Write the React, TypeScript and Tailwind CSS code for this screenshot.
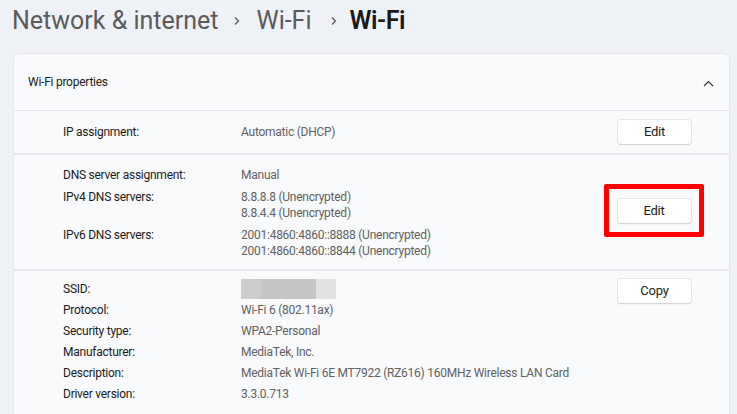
import React from "react";

type Prop = { label: string; value: React.ReactNode };

const EditButton = ({ text }: { text: string }) => (
  <button
    type="button"
    className="w-[75px] h-[26px] rounded-[4px] border border-[#e5e5e5] border-b-[#d4d4d4] bg-white text-[13px] tracking-[-0.2px] text-[#1b1b1b] shadow-[0_1px_0_rgba(0,0,0,0.03)]"
  >
    {text}
  </button>
);

const Chevron = ({ className }: { className: string }) => (
  <svg width="10" height="12" viewBox="0 0 10 12" className={className}>
    <path d="M3 2.5 L6.5 6 L3 9.5" fill="none" stroke="#5c5c5c" strokeWidth="1.3" />
  </svg>
);

const App = () => {
  const details: Prop[] = [
    { label: "Protocol:", value: "Wi-Fi 6 (802.11ax)" },
    { label: "Security type:", value: "WPA2-Personal" },
    { label: "Manufacturer:", value: "MediaTek, Inc." },
    { label: "Description:", value: "MediaTek Wi-Fi 6E MT7922 (RZ616) 160MHz Wireless LAN Card" },
    { label: "Driver version:", value: "3.3.0.713" },
  ];

  return (
    <div
      className="w-[737px] h-[414px] overflow-hidden bg-[#eef2f7] pl-[13px] pr-[7px]"
      style={{ fontFamily: "Roboto, 'Noto Sans', sans-serif" }}
    >
      {/* breadcrumb */}
      <div className="h-[53px] flex items-start pt-[5px] text-[25px] leading-[32px]">
        <span className="text-[#5a5a5a] -ml-[1px]">Network &amp; internet</span>
        <Chevron className="ml-[14px] mr-[14px] mt-[10px]" />
        <span className="text-[#5a5a5a]">Wi-Fi</span>
        <Chevron className="ml-[17px] mr-[11px] mt-[10px]" />
        <span className="text-[#1a1a1a] font-semibold tracking-[-0.5px]">Wi-Fi</span>
      </div>

      <div className="rounded-t-[6px] border border-[#e3e6ea] bg-[#f9fafc] text-[12px] tracking-[-0.25px]">
        <div className="h-[56px] flex items-center justify-between pl-[14px] pr-[15px]">
          <span className="text-[#1b1b1b]">Wi-Fi properties</span>
          <svg width="11" height="7" viewBox="0 0 11 7" className="mt-[2px]">
            <path d="M1 6 L5.5 1.5 L10 6" fill="none" stroke="#333" strokeWidth="1.1" />
          </svg>
        </div>

        {/* ip assignment */}
        <div className="h-[43px] border-t border-[#e3e6ea] flex items-center pl-[49px] pr-[37px]">
          <span className="w-[178px] text-[#1b1b1b]">IP assignment:</span>
          <span className="flex-1 text-[#616161]">Automatic (DHCP)</span>
          <EditButton text="Edit" />
        </div>

        {/* dns */}
        <div className="h-[116px] border-t-2 border-[#e6e9ed] flex items-center pl-[49px] pr-[25px]">
          <div className="flex-1 grid grid-cols-[178px_1fr] leading-[16px] gap-y-[6px] pt-[1px]">
            <span className="text-[#1b1b1b]">DNS server assignment:</span>
            <span className="text-[#616161]">Manual</span>
            <span className="text-[#1b1b1b]">IPv4 DNS servers:</span>
            <span className="text-[#616161]">
              8.8.8.8 (Unencrypted)
              <br />
              8.8.4.4 (Unencrypted)
            </span>
            <span className="text-[#1b1b1b]">IPv6 DNS servers:</span>
            <span className="text-[#616161]">
              2001:4860:4860::8888 (Unencrypted)
              <br />
              2001:4860:4860::8844 (Unencrypted)
            </span>
          </div>
          <div className="border-[5px] border-[#ff0000] rounded-[2px] w-[100px] h-[53px] flex items-center justify-center mt-[-3px]">
            <EditButton text="Edit" />
          </div>
        </div>

        {/* adapter details */}
        <div className="h-[160px] border-t-2 border-[#e6e9ed] flex items-start pl-[49px] pr-[37px] pt-[7px]">
          <div className="flex-1 grid grid-cols-[178px_1fr] auto-rows-[21px] items-center">
            <span className="text-[#1b1b1b]">SSID:</span>
            <span className="flex h-[20px] w-[95px]">
              <span className="w-[20px] bg-[#cccccc]" />
              <span className="w-[55px] bg-[#c4c5c4]" />
              <span className="w-[20px] bg-[#e2e2e3]" />
            </span>
            {details.map((d) => (
              <React.Fragment key={d.label}>
                <span className="text-[#1b1b1b]">{d.label}</span>
                <span className="text-[#616161]">{d.value}</span>
              </React.Fragment>
            ))}
          </div>
          <EditButton text="Copy" />
        </div>
      </div>
    </div>
  );
};

export default App;
